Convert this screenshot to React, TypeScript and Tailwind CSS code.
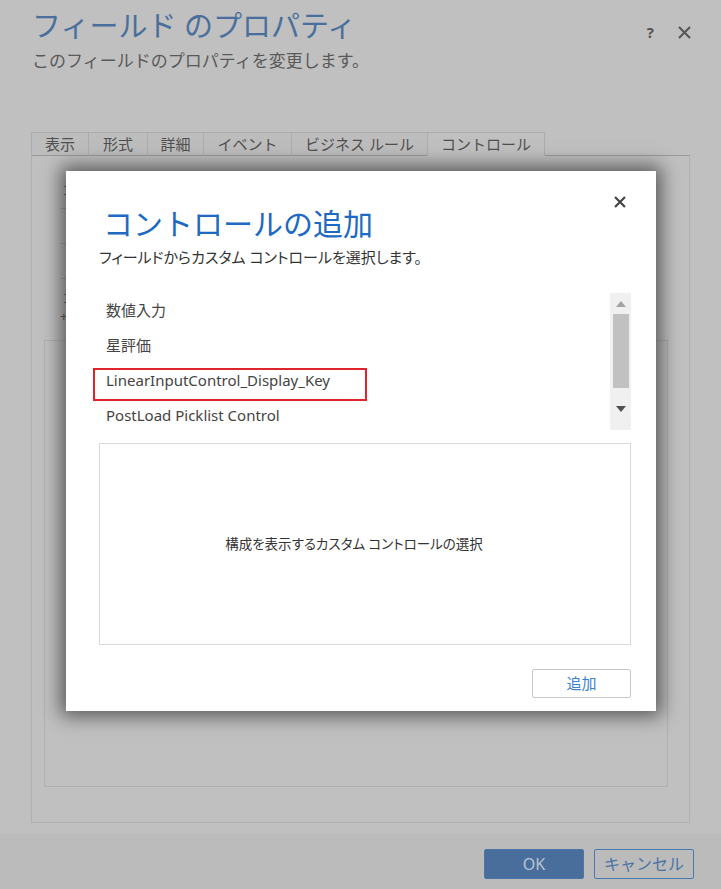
import React from "react";

const tabs = [
  { label: "表示", w: "w-[57px]" },
  { label: "形式", w: "w-[59px]" },
  { label: "詳細", w: "w-[56px]" },
  { label: "イベント", w: "w-[88px]" },
  { label: "ビジネス ルール", w: "w-[136px]" },
];

const items = ["数値入力", "星評価", "LinearInputControl_Display_Key", "PostLoad Picklist Control"];

export default function App() {
  return (
    <div className="relative w-[721px] h-[889px] overflow-hidden bg-[#c0c0c0] flex flex-col font-['Noto_Sans','Noto_Sans_CJK_JP',sans-serif]">
      {/* header */}
      <div className="h-[132px] flex justify-between pl-[32px] pr-[30px] pt-[7px]">
        <div className="flex flex-col">
          <div className="text-[29px] leading-[38px] text-[#4a6f9d]">フィールド のプロパティ</div>
          <div className="text-[17px] leading-[24px] mt-[4px] text-[#595959]">このフィールドのプロパティを変更します。</div>
        </div>
        <div className="flex items-start gap-[24px] pt-[15px] text-[#555]">
          <span className="text-[15px] leading-[20px] font-bold">?</span>
          <svg width="13" height="13" viewBox="0 0 13 13" className="mt-[4px]">
            <path d="M1 1 L12 12 M12 1 L1 12" stroke="#555" strokeWidth="2" />
          </svg>
        </div>
      </div>

      {/* tabs */}
      <div className="flex pl-[31px] -mb-px relative z-10">
        {tabs.map((t) => (
          <div
            key={t.label}
            className={`${t.w} h-[24px] flex items-center justify-center border border-r-0 border-[#acacac] border-b-[#9a9a9a] bg-[#bdbdbd] text-[15px] text-[#505050]`}
          >
            {t.label}
          </div>
        ))}
        <div className="w-[118px] h-[24px] flex items-center justify-center border border-[#acacac] border-b-[#c0c0c0] bg-[#c0c0c0] text-[15px] text-[#505050]">
          コントロール
        </div>
      </div>

      {/* panel */}
      <div className="mx-[31px] h-[668px] border border-[#b0b0b0] border-t-[#9a9a9a] flex flex-col">
        <div className="flex pl-[28px] pr-[39px] pt-[18px] h-[184px]">
          <div className="flex-1 flex flex-col text-[#666] text-[13px]">
            <div className="h-[35px] border-b border-[#acacac] flex items-center pl-[2px]">コ</div>
            <div className="h-[35px] border-b border-[#acacac]" />
            <div className="h-[35px] border-b border-[#acacac]" />
            <div className="pt-[10px] pl-[2px] leading-[18px]">コ</div>
            <div className="leading-[18px]">+</div>
          </div>
          <div className="w-[22px] h-[150px] flex flex-col bg-[#bcbcbc]">
            <div className="h-[22px]" />
            <div className="h-[101px] bg-[#a9a9a9]" />
            <div className="flex-1 flex items-center justify-center text-[9px] text-[#666]">▼</div>
          </div>
        </div>
        <div className="ml-[12px] mr-[21px] h-[447px] border border-[#b0b0b0]" />
      </div>

      <div className="h-[11px]" />

      {/* footer */}
      <div className="flex-1 bg-[#bbbbbb] flex justify-end items-start pt-[15px] pr-[27px] gap-[10px]">
        <div className="w-[100px] h-[30px] rounded-[2px] bg-[#4a6e9b] border border-[#4b77a8] flex items-center justify-center text-[16px] text-[#b9c5d4]">
          OK
        </div>
        <div className="w-[100px] h-[30px] rounded-[2px] border border-[#4a7bb0] flex items-center justify-center text-[16px] text-[#4a73a3]">
          キャンセル
        </div>
      </div>

      {/* modal */}
      <div className="absolute left-[66px] top-[171px] w-[590px] h-[540px] bg-white shadow-[0_0_18px_5px_rgba(0,0,0,0.55)] flex flex-col pl-[33px] pr-[25px] z-20">
        <svg width="12" height="12" viewBox="0 0 12 12" className="absolute left-[548px] top-[25px]">
          <path d="M1 1 L11 11 M11 1 L1 11" stroke="#444" strokeWidth="2.2" />
        </svg>
        <div className="mt-[34px] ml-[4px] text-[30px] leading-[38px] text-[#1c6ac2]">コントロールの追加</div>
        <div className="mt-[3px] text-[15px] leading-[22px] text-[#333] [font-feature-settings:'palt']">フィールドからカスタム コントロールを選択します。</div>
        <div className="relative mt-[25px] h-[137px] flex">
          <div className="flex-1 overflow-hidden flex flex-col">
            {items.map((it) => (
              <div key={it} className="h-[35px] shrink-0 flex items-center pl-[7px] text-[15px] text-[#444]">
                {it}
              </div>
            ))}
          </div>
          <div className="w-[21px] bg-[#f0f0f0] flex flex-col items-center">
            <div className="h-[21px] flex items-center justify-center">
              <div className="w-0 h-0 border-l-[5px] border-r-[5px] border-b-[6px] border-l-transparent border-r-transparent border-b-[#a3a3a3]" />
            </div>
            <div className="w-[16px] h-[74px] bg-[#c1c1c1]" />
            <div className="flex-1 flex items-center justify-center">
              <div className="w-0 h-0 border-l-[5px] border-r-[5px] border-t-[6px] border-l-transparent border-r-transparent border-t-[#505050]" />
            </div>
          </div>
          <div className="absolute left-[-6px] top-[75px] w-[274px] h-[33px] border-2 border-[#e0242b]" />
        </div>
        <div className="mt-[13px] h-[202px] border border-[#dadada] flex items-center justify-center pr-[22px] text-[13.5px] text-[#333] [font-feature-settings:'palt']">
          構成を表示するカスタム コントロールの選択
        </div>
        <div className="flex justify-end mt-[24px]">
          <div className="w-[99px] h-[29px] rounded-[2px] border border-[#c8c8c8] flex items-center justify-center text-[15px] text-[#3a80d6]">
            追加
          </div>
        </div>
      </div>
    </div>
  );
}
